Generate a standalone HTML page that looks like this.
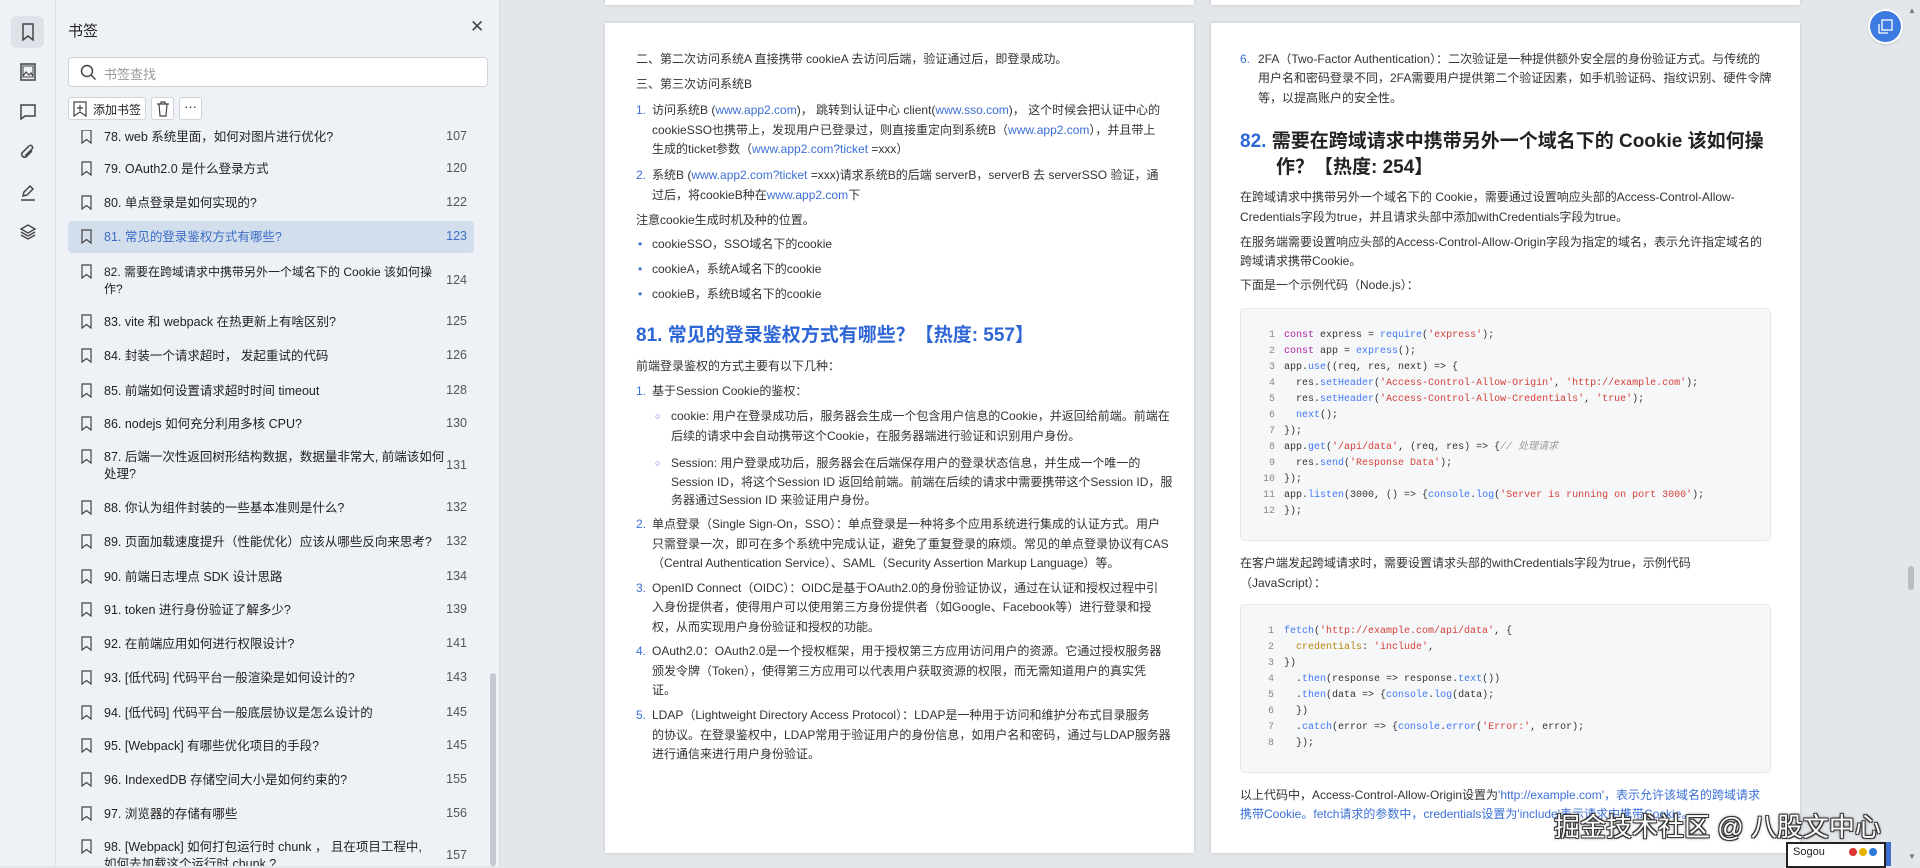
<!DOCTYPE html>
<html><head><meta charset="utf-8">
<style>
*{margin:0;padding:0;box-sizing:border-box}
body{width:1920px;height:866px;overflow:hidden;background:#e3e6ea;font-family:"Liberation Sans","Noto Sans CJK SC",sans-serif;position:relative;color:#333}
.abs{position:absolute;white-space:nowrap}
#rail{left:0;top:0;width:56px;height:866px;background:#eef1f5;border-right:1px solid #dde1e6}
#side{left:56px;top:0;width:444px;height:866px;background:#eef1f5;border-right:1px solid #d9dde3}
.ic{position:absolute;left:18px;width:20px;height:20px}
.page{position:absolute;background:#fff;box-shadow:0 0 3px rgba(0,0,0,.15)}
.t{position:absolute;white-space:nowrap;font-size:12px;line-height:18px;color:#333}
.b{color:#3b6fd6}
.h{position:absolute;white-space:nowrap;font-size:19px;line-height:26px;color:#222;font-weight:bold}
.row{position:absolute;left:12px;width:406px;font-size:12.5px;color:#222}
.row .bm{position:absolute;left:13px;width:11px;height:15px}
.row .tx{position:absolute;left:36px;line-height:17px;white-space:nowrap}
.row .pg{position:absolute;right:7px;color:#555}
.code{position:absolute;background:#f6f7f9;border:1px solid #e4e6ea;border-radius:5px}
.cl{position:absolute;font-family:"Liberation Mono",monospace;font-size:10px;line-height:16px;white-space:pre;color:#333}
.ln{position:absolute;font-family:"Liberation Mono",monospace;font-size:10px;line-height:16px;color:#888;text-align:right;width:20px}
.k{color:#a626a4}.f{color:#4078f2}.s{color:#d4403a}.c{color:#999;font-style:italic}.p{color:#b8860b}
</style></head><body>

<div class="abs" id="rail">
 <div style="position:absolute;left:11px;top:16px;width:33px;height:32px;background:#dde2e9;border-radius:6px"></div>
 <svg class="ic" style="top:22px" viewBox="0 0 20 20"><path d="M5 2h10v16l-5-4-5 4z" fill="none" stroke="#444" stroke-width="1.5"/></svg>
 <svg class="ic" style="top:62px" viewBox="0 0 20 20"><rect x="3" y="2" width="14" height="16" fill="none" stroke="#444" stroke-width="1.5"/><path d="M5 14l3-4 3 3 2-2 2 3" fill="none" stroke="#444" stroke-width="1.2"/><rect x="5" y="4" width="10" height="11" fill="none" stroke="#444" stroke-width="1"/></svg>
 <svg class="ic" style="top:102px" viewBox="0 0 20 20"><path d="M3 3h14v11H7l-4 3z" fill="none" stroke="#444" stroke-width="1.5"/></svg>
 <svg class="ic" style="top:142px" viewBox="0 0 20 20"><path d="M14 9l-6 6a3 3 0 01-4-4l7-7a2 2 0 013 3l-7 7" fill="none" stroke="#444" stroke-width="1.5"/></svg>
 <svg class="ic" style="top:182px" viewBox="0 0 20 20"><path d="M5 14l1-4 6-6 3 3-6 6zM3 18h14" fill="none" stroke="#444" stroke-width="1.5"/></svg>
 <svg class="ic" style="top:222px" viewBox="0 0 20 20"><path d="M10 3l7 4-7 4-7-4zM3 10l7 4 7-4M3 13l7 4 7-4" fill="none" stroke="#444" stroke-width="1.4"/></svg>
</div>

<div class="abs" id="side">
 <div class="abs" style="left:12px;top:20px;font-size:15px;color:#222">书签</div>
 <div class="abs" style="left:414px;top:17px;font-size:17px;color:#444">✕</div>
 <div class="abs" style="left:12px;top:57px;width:420px;height:30px;background:#fff;border:1px solid #cfd4da;border-radius:4px">
  <svg style="position:absolute;left:11px;top:6px" width="17" height="17" viewBox="0 0 17 17"><circle cx="7" cy="7" r="5.5" fill="none" stroke="#444" stroke-width="1.5"/><path d="M11 11l4.5 4.5" stroke="#444" stroke-width="1.5"/></svg>
  <span style="position:absolute;left:35px;top:6px;font-size:13px;color:#999">书签查找</span>
 </div>
 <div class="abs" style="left:12px;top:97px;width:78px;height:23px;background:#fff;border:1px solid #cfd4da;border-radius:3px">
  <svg style="position:absolute;left:4px;top:3px" width="14" height="16" viewBox="0 0 14 16"><path d="M1 1h12v14l-6-4-6 4z M7 4v6M4 7h6" fill="none" stroke="#444" stroke-width="1.2"/></svg>
  <span style="position:absolute;left:24px;top:3px;font-size:12px;color:#222">添加书签</span>
 </div>
 <div class="abs" style="left:95px;top:97px;width:23px;height:23px;background:#fff;border:1px solid #cfd4da;border-radius:3px">
  <svg style="position:absolute;left:4px;top:3px" width="14" height="16" viewBox="0 0 14 16"><path d="M1 3h12M5 3V1h4v2M3 3l1 12h6l1-12" fill="none" stroke="#444" stroke-width="1.2"/></svg>
 </div>
 <div class="abs" style="left:123px;top:97px;width:23px;height:23px;background:#fff;border:1px solid #cfd4da;border-radius:3px;font-size:13px;text-align:center;line-height:18px;color:#222">···</div>

 <div style="position:absolute;left:0;top:130px;width:436px;height:736px;overflow:hidden">
  <div style="position:absolute;left:12px;top:91px;width:406px;height:32px;background:#d3deec;border-radius:4px"></div>
  <div class="row" style="top:-1px"><svg class="bm" viewBox="0 0 11 15"><path d="M1 1h9v13l-4.5-3.5L1 14z" fill="none" stroke="#444" stroke-width="1.2"/></svg><span class="tx">78. web 系统里面，如何对图片进行优化?</span><span class="pg">107</span></div>
  <div class="row" style="top:31px"><svg class="bm" viewBox="0 0 11 15"><path d="M1 1h9v13l-4.5-3.5L1 14z" fill="none" stroke="#444" stroke-width="1.2"/></svg><span class="tx">79. OAuth2.0 是什么登录方式</span><span class="pg">120</span></div>
  <div class="row" style="top:65px"><svg class="bm" viewBox="0 0 11 15"><path d="M1 1h9v13l-4.5-3.5L1 14z" fill="none" stroke="#444" stroke-width="1.2"/></svg><span class="tx">80. 单点登录是如何实现的?</span><span class="pg">122</span></div>
  <div class="row" style="top:99px;color:#3a6cc6"><svg class="bm" viewBox="0 0 11 15"><path d="M1 1h9v13l-4.5-3.5L1 14z" fill="none" stroke="#444" stroke-width="1.2"/></svg><span class="tx">81. 常见的登录鉴权方式有哪些?</span><span class="pg" style="color:#3a6cc6">123</span></div>
  <div class="row" style="top:134px"><svg class="bm" viewBox="0 0 11 15"><path d="M1 1h9v13l-4.5-3.5L1 14z" fill="none" stroke="#444" stroke-width="1.2"/></svg><span class="tx" style="font-size:12px">82. 需要在跨域请求中携带另外一个域名下的 Cookie 该如何操<br>作?</span><span class="pg" style="top:9px">124</span></div>
  <div class="row" style="top:184px"><svg class="bm" viewBox="0 0 11 15"><path d="M1 1h9v13l-4.5-3.5L1 14z" fill="none" stroke="#444" stroke-width="1.2"/></svg><span class="tx">83. vite 和 webpack 在热更新上有啥区别?</span><span class="pg">125</span></div>
  <div class="row" style="top:218px"><svg class="bm" viewBox="0 0 11 15"><path d="M1 1h9v13l-4.5-3.5L1 14z" fill="none" stroke="#444" stroke-width="1.2"/></svg><span class="tx">84. 封装一个请求超时， 发起重试的代码</span><span class="pg">126</span></div>
  <div class="row" style="top:253px"><svg class="bm" viewBox="0 0 11 15"><path d="M1 1h9v13l-4.5-3.5L1 14z" fill="none" stroke="#444" stroke-width="1.2"/></svg><span class="tx">85. 前端如何设置请求超时时间 timeout</span><span class="pg">128</span></div>
  <div class="row" style="top:286px"><svg class="bm" viewBox="0 0 11 15"><path d="M1 1h9v13l-4.5-3.5L1 14z" fill="none" stroke="#444" stroke-width="1.2"/></svg><span class="tx">86. nodejs 如何充分利用多核 CPU?</span><span class="pg">130</span></div>
  <div class="row" style="top:319px"><svg class="bm" viewBox="0 0 11 15"><path d="M1 1h9v13l-4.5-3.5L1 14z" fill="none" stroke="#444" stroke-width="1.2"/></svg><span class="tx">87. 后端一次性返回树形结构数据，数据量非常大, 前端该如何<br>处理?</span><span class="pg" style="top:9px">131</span></div>
  <div class="row" style="top:370px"><svg class="bm" viewBox="0 0 11 15"><path d="M1 1h9v13l-4.5-3.5L1 14z" fill="none" stroke="#444" stroke-width="1.2"/></svg><span class="tx">88. 你认为组件封装的一些基本准则是什么?</span><span class="pg">132</span></div>
  <div class="row" style="top:404px"><svg class="bm" viewBox="0 0 11 15"><path d="M1 1h9v13l-4.5-3.5L1 14z" fill="none" stroke="#444" stroke-width="1.2"/></svg><span class="tx">89. 页面加载速度提升（性能优化）应该从哪些反向来思考?</span><span class="pg">132</span></div>
  <div class="row" style="top:439px"><svg class="bm" viewBox="0 0 11 15"><path d="M1 1h9v13l-4.5-3.5L1 14z" fill="none" stroke="#444" stroke-width="1.2"/></svg><span class="tx">90. 前端日志埋点 SDK 设计思路</span><span class="pg">134</span></div>
  <div class="row" style="top:472px"><svg class="bm" viewBox="0 0 11 15"><path d="M1 1h9v13l-4.5-3.5L1 14z" fill="none" stroke="#444" stroke-width="1.2"/></svg><span class="tx">91. token 进行身份验证了解多少?</span><span class="pg">139</span></div>
  <div class="row" style="top:506px"><svg class="bm" viewBox="0 0 11 15"><path d="M1 1h9v13l-4.5-3.5L1 14z" fill="none" stroke="#444" stroke-width="1.2"/></svg><span class="tx">92. 在前端应用如何进行权限设计?</span><span class="pg">141</span></div>
  <div class="row" style="top:540px"><svg class="bm" viewBox="0 0 11 15"><path d="M1 1h9v13l-4.5-3.5L1 14z" fill="none" stroke="#444" stroke-width="1.2"/></svg><span class="tx">93. [低代码] 代码平台一般渲染是如何设计的?</span><span class="pg">143</span></div>
  <div class="row" style="top:575px"><svg class="bm" viewBox="0 0 11 15"><path d="M1 1h9v13l-4.5-3.5L1 14z" fill="none" stroke="#444" stroke-width="1.2"/></svg><span class="tx">94. [低代码] 代码平台一般底层协议是怎么设计的</span><span class="pg">145</span></div>
  <div class="row" style="top:608px"><svg class="bm" viewBox="0 0 11 15"><path d="M1 1h9v13l-4.5-3.5L1 14z" fill="none" stroke="#444" stroke-width="1.2"/></svg><span class="tx">95. [Webpack] 有哪些优化项目的手段?</span><span class="pg">145</span></div>
  <div class="row" style="top:642px"><svg class="bm" viewBox="0 0 11 15"><path d="M1 1h9v13l-4.5-3.5L1 14z" fill="none" stroke="#444" stroke-width="1.2"/></svg><span class="tx">96. IndexedDB 存储空间大小是如何约束的?</span><span class="pg">155</span></div>
  <div class="row" style="top:676px"><svg class="bm" viewBox="0 0 11 15"><path d="M1 1h9v13l-4.5-3.5L1 14z" fill="none" stroke="#444" stroke-width="1.2"/></svg><span class="tx">97. 浏览器的存储有哪些</span><span class="pg">156</span></div>
  <div class="row" style="top:709px"><svg class="bm" viewBox="0 0 11 15"><path d="M1 1h9v13l-4.5-3.5L1 14z" fill="none" stroke="#444" stroke-width="1.2"/></svg><span class="tx">98. [Webpack] 如何打包运行时 chunk ， 且在项目工程中,<br>如何去加载这个运行时 chunk ?</span><span class="pg" style="top:9px">157</span></div>
 </div>
 <div style="position:absolute;left:434px;top:673px;width:6px;height:193px;background:#c5cad1;border-radius:3px"></div>
</div>

<div class="page" style="left:605px;top:-10px;width:589px;height:15px"></div>
<div class="page" style="left:1211px;top:-10px;width:589px;height:15px"></div>

<div class="page" style="left:605px;top:23px;width:589px;height:830px"></div>
<div class="t" style="left:636px;top:50px">二、第二次访问系统A 直接携带 cookieA 去访问后端，验证通过后，即登录成功。</div>
<div class="t" style="left:636px;top:75px">三、第三次访问系统B</div>
<div class="t b" style="left:636px;top:101px">1.</div>
<div class="t" style="left:652px;top:101px">访问系统B (<span class="b">www.app2.com</span>)， 跳转到认证中心 client(<span class="b">www.sso.com</span>)， 这个时候会把认证中心的</div>
<div class="t" style="left:652px;top:121px">cookieSSO也携带上，发现用户已登录过，则直接重定向到系统B（<span class="b">www.app2.com</span>），并且带上</div>
<div class="t" style="left:652px;top:140px">生成的ticket参数（<span class="b">www.app2.com?ticket</span> =xxx）</div>
<div class="t b" style="left:636px;top:166px">2.</div>
<div class="t" style="left:652px;top:166px">系统B (<span class="b">www.app2.com?ticket</span> =xxx)请求系统B的后端 serverB，serverB 去 serverSSO 验证，通</div>
<div class="t" style="left:652px;top:186px">过后，将cookieB种在<span class="b">www.app2.com</span>下</div>
<div class="t" style="left:636px;top:211px">注意cookie生成时机及种的位置。</div>
<div class="t b" style="left:638px;top:235px">•</div><div class="t" style="left:652px;top:235px">cookieSSO，SSO域名下的cookie</div>
<div class="t b" style="left:638px;top:260px">•</div><div class="t" style="left:652px;top:260px">cookieA，系统A域名下的cookie</div>
<div class="t b" style="left:638px;top:285px">•</div><div class="t" style="left:652px;top:285px">cookieB，系统B域名下的cookie</div>
<div class="h" style="left:636px;top:323px;color:#2e66d6">81. 常见的登录鉴权方式有哪些？【热度: 557】</div>
<div class="t" style="left:636px;top:357px">前端登录鉴权的方式主要有以下几种：</div>
<div class="t b" style="left:636px;top:382px">1.</div><div class="t" style="left:652px;top:382px">基于Session Cookie的鉴权：</div>
<div class="t b" style="left:655px;top:407px;font-size:9px">○</div>
<div class="t" style="left:671px;top:407px">cookie: 用户在登录成功后，服务器会生成一个包含用户信息的Cookie，并返回给前端。前端在</div>
<div class="t" style="left:671px;top:427px">后续的请求中会自动携带这个Cookie，在服务器端进行验证和识别用户身份。</div>
<div class="t b" style="left:655px;top:454px;font-size:9px">○</div>
<div class="t" style="left:671px;top:454px">Session: 用户登录成功后，服务器会在后端保存用户的登录状态信息，并生成一个唯一的</div>
<div class="t" style="left:671px;top:473px">Session ID，将这个Session ID 返回给前端。前端在后续的请求中需要携带这个Session ID，服</div>
<div class="t" style="left:671px;top:491px">务器通过Session ID 来验证用户身份。</div>
<div class="t b" style="left:636px;top:515px">2.</div>
<div class="t" style="left:652px;top:515px">单点登录（Single Sign-On，SSO）：单点登录是一种将多个应用系统进行集成的认证方式。用户</div>
<div class="t" style="left:652px;top:535px">只需登录一次，即可在多个系统中完成认证，避免了重复登录的麻烦。常见的单点登录协议有CAS</div>
<div class="t" style="left:652px;top:554px">（Central Authentication Service）、SAML（Security Assertion Markup Language）等。</div>
<div class="t b" style="left:636px;top:579px">3.</div>
<div class="t" style="left:652px;top:579px">OpenID Connect（OIDC）：OIDC是基于OAuth2.0的身份验证协议，通过在认证和授权过程中引</div>
<div class="t" style="left:652px;top:598px">入身份提供者，使得用户可以使用第三方身份提供者（如Google、Facebook等）进行登录和授</div>
<div class="t" style="left:652px;top:618px">权，从而实现用户身份验证和授权的功能。</div>
<div class="t b" style="left:636px;top:642px">4.</div>
<div class="t" style="left:652px;top:642px">OAuth2.0：OAuth2.0是一个授权框架，用于授权第三方应用访问用户的资源。它通过授权服务器</div>
<div class="t" style="left:652px;top:662px">颁发令牌（Token），使得第三方应用可以代表用户获取资源的权限，而无需知道用户的真实凭</div>
<div class="t" style="left:652px;top:681px">证。</div>
<div class="t b" style="left:636px;top:706px">5.</div>
<div class="t" style="left:652px;top:706px">LDAP（Lightweight Directory Access Protocol）：LDAP是一种用于访问和维护分布式目录服务</div>
<div class="t" style="left:652px;top:726px">的协议。在登录鉴权中，LDAP常用于验证用户的身份信息，如用户名和密码，通过与LDAP服务器</div>
<div class="t" style="left:652px;top:745px">进行通信来进行用户身份验证。</div>

<div class="page" style="left:1211px;top:23px;width:589px;height:830px"></div>
<div class="t b" style="left:1240px;top:50px">6.</div>
<div class="t" style="left:1258px;top:50px">2FA（Two-Factor Authentication）：二次验证是一种提供额外安全层的身份验证方式。与传统的</div>
<div class="t" style="left:1258px;top:69px">用户名和密码登录不同，2FA需要用户提供第二个验证因素，如手机验证码、指纹识别、硬件令牌</div>
<div class="t" style="left:1258px;top:89px">等，以提高账户的安全性。</div>
<div class="h" style="left:1240px;top:129px"><span style="color:#2e66d6">82.</span> 需要在跨域请求中携带另外一个域名下的 Cookie 该如何操</div>
<div class="h" style="left:1276px;top:155px">作？【热度: 254】</div>
<div class="t" style="left:1240px;top:188px">在跨域请求中携带另外一个域名下的 Cookie，需要通过设置响应头部的Access-Control-Allow-</div>
<div class="t" style="left:1240px;top:208px">Credentials字段为true，并且请求头部中添加withCredentials字段为true。</div>
<div class="t" style="left:1240px;top:233px">在服务端需要设置响应头部的Access-Control-Allow-Origin字段为指定的域名，表示允许指定域名的</div>
<div class="t" style="left:1240px;top:252px">跨域请求携带Cookie。</div>
<div class="t" style="left:1240px;top:276px">下面是一个示例代码（Node.js）：</div>

<div class="code" style="left:1240px;top:308px;width:531px;height:233px"></div>
<div class="ln" style="left:1255px;top:328px">1<br>2<br>3<br>4<br>5<br>6<br>7<br>8<br>9<br>10<br>11<br>12</div>
<div class="cl" style="left:1284px;top:328px"><span class="k">const</span> express = <span class="f">require</span>(<span class="s">'express'</span>);
<span class="k">const</span> app = <span class="f">express</span>();
app.<span class="f">use</span>((req, res, next) =&gt; {
  res.<span class="f">setHeader</span>(<span class="s">'Access-Control-Allow-Origin'</span>, <span class="s">'http://example.com'</span>);
  res.<span class="f">setHeader</span>(<span class="s">'Access-Control-Allow-Credentials'</span>, <span class="s">'true'</span>);
  <span class="f">next</span>();
});
app.<span class="f">get</span>(<span class="s">'/api/data'</span>, (req, res) =&gt; {<span class="c">// 处理请求</span>
  res.<span class="f">send</span>(<span class="s">'Response Data'</span>);
});
app.<span class="f">listen</span>(3000, () =&gt; {<span class="f">console</span>.<span class="f">log</span>(<span class="s">'Server is running on port 3000'</span>);
});</div>

<div class="t" style="left:1240px;top:554px">在客户端发起跨域请求时，需要设置请求头部的withCredentials字段为true，示例代码</div>
<div class="t" style="left:1240px;top:574px">（JavaScript）：</div>

<div class="code" style="left:1240px;top:604px;width:531px;height:169px"></div>
<div class="ln" style="left:1254px;top:624px">1<br>2<br>3<br>4<br>5<br>6<br>7<br>8</div>
<div class="cl" style="left:1284px;top:624px"><span class="f">fetch</span>(<span class="s">'http://example.com/api/data'</span>, {
  <span class="p">credentials</span>: <span class="s">'include'</span>,
})
  .<span class="f">then</span>(response =&gt; response.<span class="f">text</span>())
  .<span class="f">then</span>(data =&gt; {<span class="f">console</span>.<span class="f">log</span>(data);
  })
  .<span class="f">catch</span>(error =&gt; {<span class="f">console</span>.<span class="f">error</span>(<span class="s">'Error:'</span>, error);
  });</div>

<div class="t" style="left:1240px;top:786px">以上代码中，Access-Control-Allow-Origin设置为<span class="b">'http://example.com'，表示允许该域名的跨域请求</span></div>
<div class="t b" style="left:1240px;top:805px">携带Cookie。fetch请求的参数中，credentials设置为'include'表示请求中携带Cookie。</div>

<div class="abs" style="left:1904px;top:0;width:16px;height:866px;background:#e3e6ea"></div>
<div class="abs" style="left:1908px;top:6px;font-size:8px;color:#777">▲</div>
<div class="abs" style="left:1908px;top:852px;font-size:8px;color:#777">▼</div>
<div class="abs" style="left:1908px;top:566px;width:6px;height:24px;background:#b9bec5;border-radius:3px"></div>

<div class="abs" style="left:1870px;top:11px;width:31px;height:31px;border-radius:50%;background:#3d7be0;box-shadow:0 0 0 2px #fff,0 1px 4px rgba(0,0,0,.3)">
 <svg style="position:absolute;left:8px;top:8px" width="15" height="15" viewBox="0 0 15 15"><rect x="4" y="1" width="10" height="10" fill="none" stroke="#fff" stroke-width="1.3"/><path d="M1 5v9h9" fill="none" stroke="#fff" stroke-width="1.3"/></svg>
</div>

<div class="abs" style="left:1554px;top:812px;font-size:26px;line-height:30px;color:#fff;text-shadow:-1px -1px 0 #333,1px -1px 0 #333,-1px 1px 0 #333,1px 1px 0 #333,0 0 3px #000">掘金技术社区 @ 八股文中心</div>
<div class="abs" style="left:1786px;top:842px;width:100px;height:26px;background:#fff;border:2px solid #222">
 <span style="position:absolute;left:5px;top:2px;font-size:11px;color:#222">Sogou</span>
 <span style="position:absolute;left:61px;top:4px;width:8px;height:8px;border-radius:50%;background:#d33"></span>
 <span style="position:absolute;left:71px;top:4px;width:8px;height:8px;border-radius:50%;background:#e5b300"></span>
 <span style="position:absolute;left:81px;top:4px;width:8px;height:8px;border-radius:50%;background:#2a7bd6"></span>
</div>
<div class="abs" style="left:1886px;top:842px;width:5px;height:24px;background:#3d6fd1"></div>
</body></html>
